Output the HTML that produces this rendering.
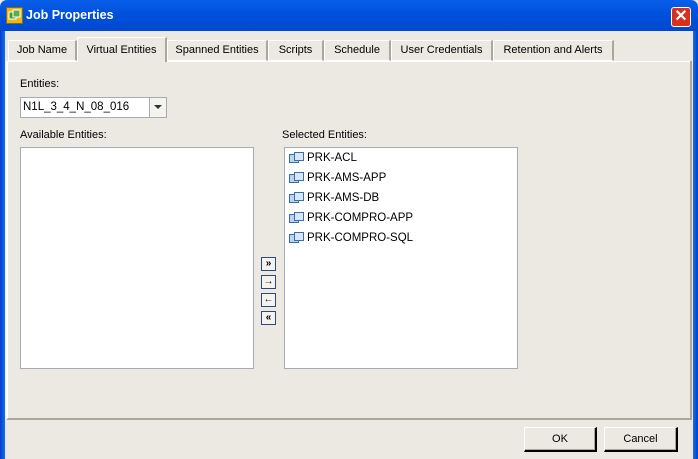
<!DOCTYPE html>
<html><head><style>
*{margin:0;padding:0;box-sizing:border-box}
body{width:698px;height:459px;overflow:hidden;background:#ece9e3;font-family:"Liberation Sans",sans-serif;font-size:11px;color:#000;position:relative}
.abs{position:absolute}
.title{left:0;top:0;width:698px;height:31px;background:linear-gradient(#0a5ee8,#0052de 40%,#0048d0);border-radius:7px 7px 0 0}
.title span{position:absolute;left:26px;top:8px;color:#fff;font-weight:bold;font-size:12.5px}
.lb{left:0;top:31px;width:5px;height:428px;background:linear-gradient(90deg,#0040c8,#1a6cf0)}
.rb{left:693px;top:31px;width:5px;height:428px;background:linear-gradient(90deg,#1a6cf0,#0040c8)}
.panel{left:6px;top:61px;width:686px;height:359px;border-left:2px solid #fff;border-right:2px solid #aca899;border-bottom:2px solid #aca899}
.tab{top:40px;height:21px;background:#ece9e3;border-top:1px solid #fff;border-left:1px solid #fff;border-right:2px solid #aca899;text-align:center;line-height:19px;border-bottom:1px solid #fff}
.tab.sel{top:37px;height:25px;border-bottom:none;z-index:2;line-height:24px}
.list{background:#fff;border:1px solid #a5acb5}
.item{position:absolute;left:4px;height:20px;line-height:20px;font-size:11.5px}
.item i{display:inline-block;width:13px;height:10px;vertical-align:-1px;margin-right:5px;position:relative}
.item i:before{content:"";position:absolute;left:0;top:2px;width:8px;height:7px;border:1px solid #3a6ea8;background:#bcd4ee}
.item i:after{content:"";position:absolute;left:5px;top:0;width:8px;height:7px;border:1px solid #3a6ea8;background:#d8e6f6}
.ab{left:261px;width:15px;height:14px;border:1px solid #2b4a7a;background:#f4f3ee;font-size:10px;line-height:12px;text-align:center;font-weight:bold}
.btn{top:427px;height:25px;border:1px solid #fff;border-right:2px solid #000;border-bottom:2px solid #000;background:#ece9e3;text-align:center;line-height:22px;box-shadow:inset -1px -1px 0 #aca899}
</style></head><body>
<div class="abs title"><svg class="abs" style="left:6px;top:7px" width="17" height="17"><rect x="0.5" y="0.5" width="16" height="16" fill="#e8b820" stroke="#8a6a10"/><rect x="3" y="5" width="7" height="7" fill="#4a9a30" stroke="#fff"/><rect x="7" y="3" width="7" height="7" fill="#5ab040" stroke="#fff"/></svg><span>Job Properties</span>
<div class="abs" style="left:671px;top:7px;width:20px;height:20px;background:#d8301c;border:1px solid #fff;border-radius:3px;color:#fff;font-weight:bold;font-size:16px;line-height:17px;text-align:center">✕</div></div>
<div class="abs lb"></div><div class="abs rb"></div>
<div class="abs panel"></div>
<div class="abs tab" style="left:8px;width:69px">Job Name</div>
<div class="abs tab sel" style="left:77px;width:90px">Virtual Entities</div>
<div class="abs tab" style="left:167px;width:101px">Spanned Entities</div>
<div class="abs tab" style="left:268px;width:56px">Scripts</div>
<div class="abs tab" style="left:324px;width:67px">Schedule</div>
<div class="abs tab" style="left:391px;width:102px">User Credentials</div>
<div class="abs tab" style="left:493px;width:121px">Retention and Alerts</div>
<div class="abs" style="left:8px;top:61px;width:69px;height:1px;background:#fff"></div>
<div class="abs" style="left:167px;top:61px;width:523px;height:1px;background:#fff"></div>
<div class="abs" style="left:20px;top:78px">Entities:</div>
<div class="abs" style="left:20px;top:97px;width:147px;height:21px;background:#fff;border:1px solid #a5acb5"><span class="abs" style="left:2px;top:3px;font-size:11.5px">N1L_3_4_N_08_016</span><div class="abs" style="left:128px;top:0;width:17px;height:19px;border-left:1px solid #a5acb5;background:#f4f3ee"><div class="abs" style="left:4px;top:7px;border-left:4px solid transparent;border-right:4px solid transparent;border-top:4px solid #333"></div></div></div>
<div class="abs" style="left:20px;top:129px">Available Entities:</div>
<div class="abs" style="left:282px;top:129px">Selected Entities:</div>
<div class="abs list" style="left:20px;top:147px;width:234px;height:222px"></div>
<div class="abs list" style="left:284px;top:147px;width:234px;height:222px">
<div class="item" style="top:0">  <i></i>PRK-ACL</div>
<div class="item" style="top:20px"><i></i>PRK-AMS-APP</div>
<div class="item" style="top:40px"><i></i>PRK-AMS-DB</div>
<div class="item" style="top:60px"><i></i>PRK-COMPRO-APP</div>
<div class="item" style="top:80px"><i></i>PRK-COMPRO-SQL</div>
</div>
<div class="abs ab" style="top:257px">»</div>
<div class="abs ab" style="top:275px">→</div>
<div class="abs ab" style="top:293px">←</div>
<div class="abs ab" style="top:311px">«</div>
<div class="abs btn" style="left:524px;width:73px">OK</div>
<div class="abs btn" style="left:604px;width:74px">Cancel</div>
</body></html>
